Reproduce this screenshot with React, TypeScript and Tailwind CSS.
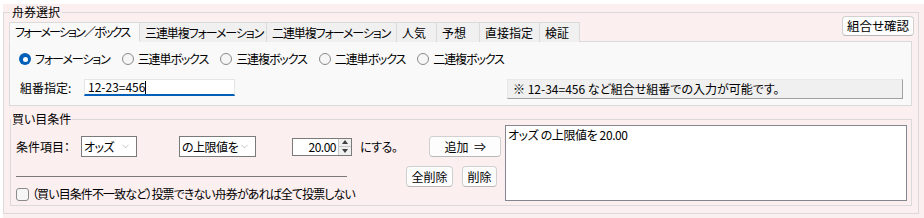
import React from 'react';
import { ChevronDown } from 'lucide-react';

const font = "font-['Noto_Sans_CJK_JP','Noto_Sans',sans-serif] [font-feature-settings:'palt']";

const tabs = [
  { label: 'フォーメーション／ボックス', w: 'w-[131px]', t: 'tracking-[-1.8px]' },
  { label: '三連単複フォーメーション', w: 'w-[128px]', t: 'tracking-[-1.1px]' },
  { label: '二連単複フォーメーション', w: 'w-[131px]', t: 'tracking-[-1.1px]' },
  { label: '人気', w: 'w-[41px]', t: '' },
  { label: '予想', w: 'w-[44px]', t: '' },
  { label: '直接指定', w: 'w-[61px]', t: '' },
  { label: '検証', w: 'w-[41px]', t: '' },
];

const radios = ['フォーメーション', '三連単ボックス', '三連複ボックス', '二連単ボックス', '二連複ボックス'];

const Radio: React.FC<{ checked?: boolean; label: string }> = ({ checked, label }) => (
  <label className="flex items-center gap-[4px] mr-[12px] whitespace-nowrap">
    {checked ? (
      <span className="w-[12px] h-[12px] rounded-full bg-[#005fb8] flex items-center justify-center">
        <span className="w-[5px] h-[5px] rounded-full bg-white" />
      </span>
    ) : (
      <span className="w-[12px] h-[12px] rounded-full border border-[#8a8a8a] bg-[#f6f6f6]" />
    )}
    <span className="tracking-[-1.1px]">{label}</span>
  </label>
);

const Btn: React.FC<{ className?: string; children: React.ReactNode }> = ({ className, children }) => (
  <button
    className={`flex items-center justify-center whitespace-nowrap rounded-[4px] border border-[#d0d0d0] border-b-[#b8b8b8] bg-[#fdfdfd] ${className ?? ''}`}
  >
    {children}
  </button>
);

const Select: React.FC<{ value: string; className: string }> = ({ value, className }) => (
  <div className={`flex items-center justify-between h-[21px] border border-[#7a7a7a] bg-white pl-[2px] pr-[5px] whitespace-nowrap ${className}`}>
    <span className="tracking-[-0.5px]">{value}</span>
    <ChevronDown className="w-[11px] h-[11px] shrink-0 text-[#808080]" strokeWidth={1} />
  </div>
);

export default function App() {
  return (
    <div className={`w-[924px] h-[218px] bg-white overflow-hidden text-[12px] leading-[16px] text-black ${font}`}>
      <div className="ml-[3px] mt-[4px] h-[214px] bg-[#fcefef]">
        <fieldset className="w-[916px] h-[210px] border border-[#dadada] p-0 m-0">
          <legend className="ml-[6px] px-[2px] leading-[16px]">舟券選択</legend>

          {/* tab row */}
          <div className="flex justify-between items-start mt-[2px] pl-[5px] pr-[4px]">
            <div className="flex">
              {tabs.map((t, i) => (
                <div
                  key={t.label}
                  className={`${t.w} ${t.t} h-[20px] flex items-center whitespace-nowrap pl-[5px] border border-[#dadada] ${i > 0 ? '-ml-px' : ''} ${
                    i === 0 ? 'bg-[#f9f9f9] border-b-[#f9f9f9] relative z-10' : 'bg-[#f0f0f0] border-b-0'
                  }`}
                >
                  {t.label}
                </div>
              ))}
            </div>
            <Btn className="w-[72px] h-[20px] -mt-[6px] text-[12.5px]">組合せ確認</Btn>
          </div>

          {/* tab panel */}
          <div className="ml-[5px] w-[903px] h-[65px] -mt-px border border-[#dadada] bg-[#f9f9f9] pt-[9px]">
            <div className="flex items-center h-[16px] pl-[9px]">
              {radios.map((r, i) => (
                <Radio key={r} label={r} checked={i === 0} />
              ))}
            </div>
            <div className="flex items-center mt-[9px] pl-[10px] pr-[8px]">
              <span className="w-[64px]">組番指定:</span>
              <div className="w-[151px] h-[17px] bg-white border border-[#e5e5e5] border-b-2 border-b-[#005fb8] pl-[3px] flex items-center leading-[14px]">
                12-23=456<span className="inline-block w-px h-[13px] bg-black" />
              </div>
              <div className="ml-auto w-[396px] h-[20px] mt-[3px] bg-[#f0f0f0] border border-[#e8e8e8] border-b-[#a0a0a0] border-r-[#a0a0a0] pl-[5px] flex items-center whitespace-nowrap">
                ※ 12-34=456 など組合せ組番での入力が可能です。
              </div>
            </div>
          </div>

          {/* 買い目条件 */}
          <fieldset className="ml-[6px] mt-[5px] w-[902px] h-[95px] border border-[#dadada] p-0 m-0">
            <legend className="px-[1px] leading-[16px]">買い目条件</legend>
            <div className="flex pl-[5px] pr-[4px]">
              <div className="w-[489px]">
                <div className="flex items-center h-[21px] mt-[9px] whitespace-nowrap">
                  <span className="w-[65px]">条件項目：</span>
                  <Select value="オッズ" className="w-[56px]" />
                  <Select value="の上限値を" className="w-[77px] ml-[42px]" />
                  <div className="ml-[36px] w-[60px] h-[18px] flex border border-[#7a7a7a] bg-white">
                    <span className="flex-1 text-right pr-[2px] leading-[16px] tracking-[-0.5px]">20.00</span>
                    <div className="w-[13px] flex flex-col border-l border-[#c8c8c8] bg-[#f0f0f0]">
                      <div className="flex-1 flex items-center justify-center border-b border-[#c8c8c8]">
                        <span className="w-0 h-0 border-l-[3px] border-r-[3px] border-b-[4px] border-l-transparent border-r-transparent border-b-[#404040]" />
                      </div>
                      <div className="flex-1 flex items-center justify-center">
                        <span className="w-0 h-0 border-l-[3px] border-r-[3px] border-t-[4px] border-l-transparent border-r-transparent border-t-[#404040]" />
                      </div>
                    </div>
                  </div>
                  <span className="ml-[8px] tracking-[-0.5px]">にする。</span>
                  <Btn className="ml-[32px] w-[72px] h-[21px]">追加&nbsp;&nbsp;⇒</Btn>
                </div>
                <div className="flex items-center h-[21px] mt-[9px]">
                  <div className="w-[331px] h-px bg-[#7a7a7a]" />
                  <Btn className="ml-[59px] w-[47px] h-[21px]">全削除</Btn>
                  <Btn className="ml-[9px] w-[35px] h-[21px]">削除</Btn>
                </div>
                <div className="flex items-center h-[14px] whitespace-nowrap">
                  <span className="w-[13px] h-[13px] shrink-0 rounded-[3px] border border-[#8a8a8a] bg-[#f6f6f6]" />
                  <span className="ml-[3px] tracking-[-0.9px]">（買い目条件不一致など）投票できない舟券があれば全て投票しない</span>
                </div>
              </div>
              <div className="w-[402px] h-[76px] -mt-[2px] border border-[#828790] bg-white px-[2px] pt-[1px] whitespace-nowrap tracking-[-0.4px]">
                オッズ の上限値を 20.00
              </div>
            </div>
          </fieldset>
        </fieldset>
      </div>
    </div>
  );
}
